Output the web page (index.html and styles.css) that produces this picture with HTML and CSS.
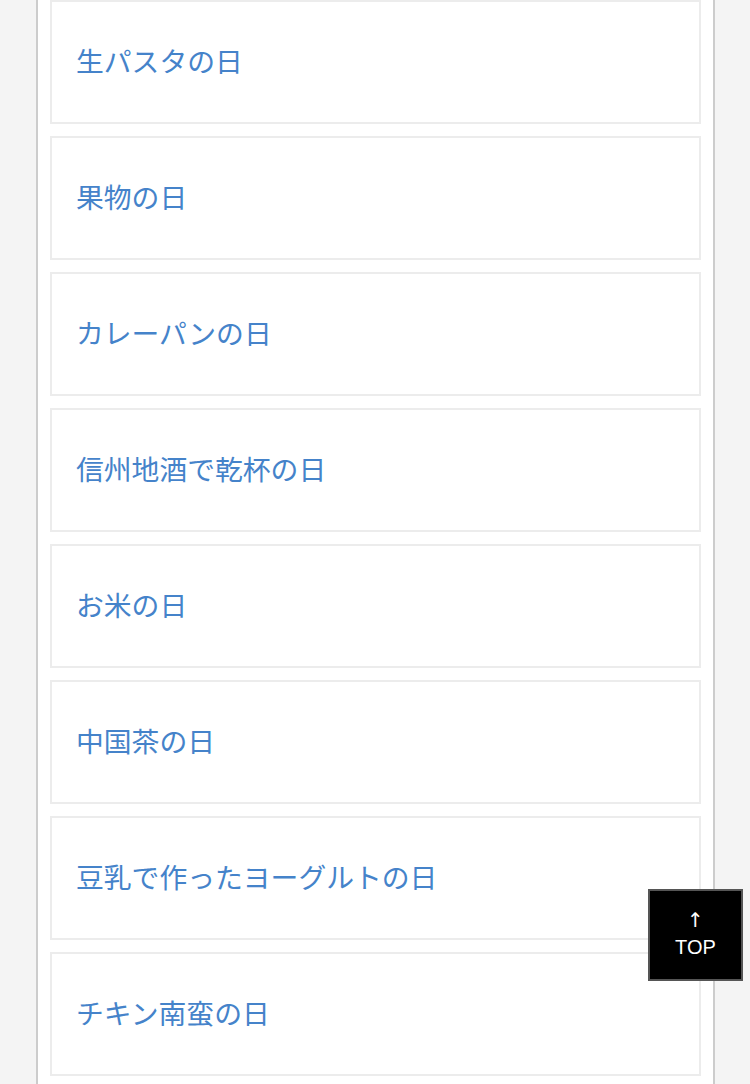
FILE: index.html
```html
<!DOCTYPE html>
<html lang="ja">
<head>
    <meta charset="UTF-8">
    <meta name="viewport" content="width=device-width, initial-scale=1.0">
    <title>今日は何の日</title>
    <link rel="stylesheet" href="styles.css">
</head>
<body>
    <div class="container">
        <ul class="day-list">
            <li class="day-item"><a href="#">生パスタの日</a></li>
            <li class="day-item"><a href="#">果物の日</a></li>
            <li class="day-item"><a href="#">カレーパンの日</a></li>
            <li class="day-item"><a href="#">信州地酒で乾杯の日</a></li>
            <li class="day-item"><a href="#">お米の日</a></li>
            <li class="day-item"><a href="#">中国茶の日</a></li>
            <li class="day-item"><a href="#">豆乳で作ったヨーグルトの日</a></li>
            <li class="day-item"><a href="#">チキン南蛮の日</a></li>
        </ul>
    </div>
    <a class="page-top" href="#">
        <span class="arrow">↑</span>
        <span>TOP</span>
    </a>
</body>
</html>
```

FILE: styles.css
```css
body {
    font-family: 'Noto Sans CJK JP', 'Noto Sans', sans-serif;
    margin: 0;
    padding: 0;
    background-color: #f4f4f4;
}

.container {
    width: 679px;
    min-height: 1084px;
    margin-left: 36px;
    padding: 0 12px;
    box-sizing: border-box;
    background-color: #ffffff;
    border-left: 2px solid #cccccc;
    border-right: 2px solid #cccccc;
}

.day-list {
    list-style: none;
    margin: 0;
    padding: 0;
}

.day-item {
    height: 120px;
    border: 2px solid #ececec;
    margin-bottom: 12px;
    display: flex;
    align-items: center;
    padding-left: 24px;
}

.day-item a {
    color: #4583ca;
    text-decoration: none;
    font-size: 27.8px;
    line-height: 1;
    margin-top: -2px;
}

.page-top {
    position: fixed;
    right: 7px;
    bottom: 103px;
    width: 95px;
    height: 92px;
    box-sizing: border-box;
    background-color: #000000;
    border: 2px solid #555555;
    color: #ffffff;
    text-decoration: none;
    font-family: 'Liberation Sans', Arial, sans-serif;
    font-size: 20px;
    line-height: 27px;
    padding-bottom: 3px;
    display: flex;
    flex-direction: column;
    align-items: center;
    justify-content: center;
}

.page-top .arrow {
    font-family: 'DejaVu Sans', sans-serif;
    font-size: 20px;
}
```
